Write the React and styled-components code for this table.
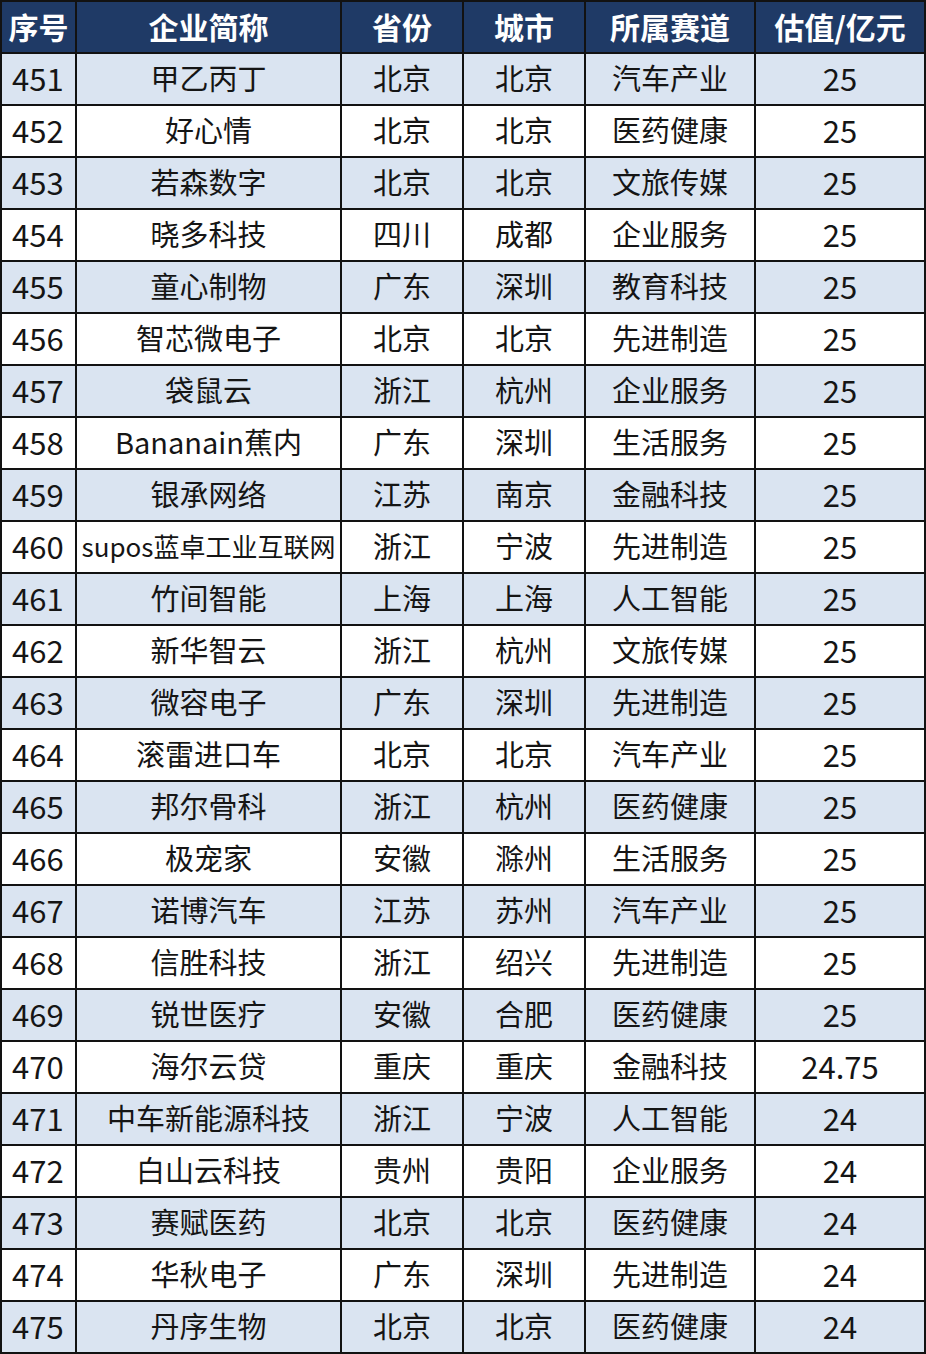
import React from "react";
import styled, { createGlobalStyle } from "styled-components";

const Global = createGlobalStyle`
  html, body { margin: 0; padding: 0; background: #ffffff; }
  body { font-family: "Noto Sans CJK SC", "Noto Sans", sans-serif; }
`;

const Table = styled.table`
  border-collapse: collapse;
  table-layout: fixed;
  width: 924px;
  font-family: "Noto Sans CJK SC", "Noto Sans", sans-serif;
`;

const Col = styled.col`
  width: ${(p) => p.$w}px;
`;

const HeadCell = styled.th`
  height: 47px;
  padding: 0 0 3px 0;
  background: #1f3a66;
  color: #ffffff;
  font-size: 30px;
  font-weight: 700;
  border: 2px solid #121212;
  text-align: center;
  vertical-align: middle;
  line-height: 1;
  white-space: nowrap;
`;

const Row = styled.tr`
  background: ${(p) => (p.$shade ? "#dae4f1" : "#ffffff")};
`;

const Cell = styled.td`
  height: 47px;
  padding: 0 0 3px ${(p) => (p.$align === "left" ? "10px" : "0")};
  border: 2px solid #121212;
  color: #151515;
  font-size: ${(p) => p.$size || 29}px;
  text-align: ${(p) => p.$align || "center"};
  vertical-align: middle;
  white-space: nowrap;
  overflow: hidden;
  line-height: 1;
`;

const cols = [75, 265, 122, 122, 170, 170];
const headers = ["序号", "企业简称", "省份", "城市", "所属赛道", "估值/亿元"];

const rows = [
  ["451", "甲乙丙丁", "北京", "北京", "汽车产业", "25"],
  ["452", "好心情", "北京", "北京", "医药健康", "25"],
  ["453", "若森数字", "北京", "北京", "文旅传媒", "25"],
  ["454", "晓多科技", "四川", "成都", "企业服务", "25"],
  ["455", "童心制物", "广东", "深圳", "教育科技", "25"],
  ["456", "智芯微电子", "北京", "北京", "先进制造", "25"],
  ["457", "袋鼠云", "浙江", "杭州", "企业服务", "25"],
  ["458", "Bananain蕉内", "广东", "深圳", "生活服务", "25"],
  ["459", "银承网络", "江苏", "南京", "金融科技", "25"],
  ["460", "supos蓝卓工业互联网", "浙江", "宁波", "先进制造", "25"],
  ["461", "竹间智能", "上海", "上海", "人工智能", "25"],
  ["462", "新华智云", "浙江", "杭州", "文旅传媒", "25"],
  ["463", "微容电子", "广东", "深圳", "先进制造", "25"],
  ["464", "滚雷进口车", "北京", "北京", "汽车产业", "25"],
  ["465", "邦尔骨科", "浙江", "杭州", "医药健康", "25"],
  ["466", "极宠家", "安徽", "滁州", "生活服务", "25"],
  ["467", "诺博汽车", "江苏", "苏州", "汽车产业", "25"],
  ["468", "信胜科技", "浙江", "绍兴", "先进制造", "25"],
  ["469", "锐世医疗", "安徽", "合肥", "医药健康", "25"],
  ["470", "海尔云贷", "重庆", "重庆", "金融科技", "24.75"],
  ["471", "中车新能源科技", "浙江", "宁波", "人工智能", "24"],
  ["472", "白山云科技", "贵州", "贵阳", "企业服务", "24"],
  ["473", "赛赋医药", "北京", "北京", "医药健康", "24"],
  ["474", "华秋电子", "广东", "深圳", "先进制造", "24"],
  ["475", "丹序生物", "北京", "北京", "医药健康", "24"],
];

function sizeFor(j, c) {
  if (j === 0 || j === 5) return 31;
  if (j === 1 && c.length > 10) return 26;
  return 29;
}

export default function App() {
  return (
    <>
      <Global />
      <Table>
        <colgroup>
          {cols.map((w, i) => (
            <Col key={i} $w={w} />
          ))}
        </colgroup>
        <thead>
          <tr>
            {headers.map((h) => (
              <HeadCell key={h}>{h}</HeadCell>
            ))}
          </tr>
        </thead>
        <tbody>
          {rows.map((r, i) => (
            <Row key={r[0]} $shade={i % 2 === 0}>
              {r.map((c, j) => (
                <Cell key={j} $align={j === 0 ? "left" : "center"} $size={sizeFor(j, c)}>
                  {c}
                </Cell>
              ))}
            </Row>
          ))}
        </tbody>
      </Table>
    </>
  );
}
